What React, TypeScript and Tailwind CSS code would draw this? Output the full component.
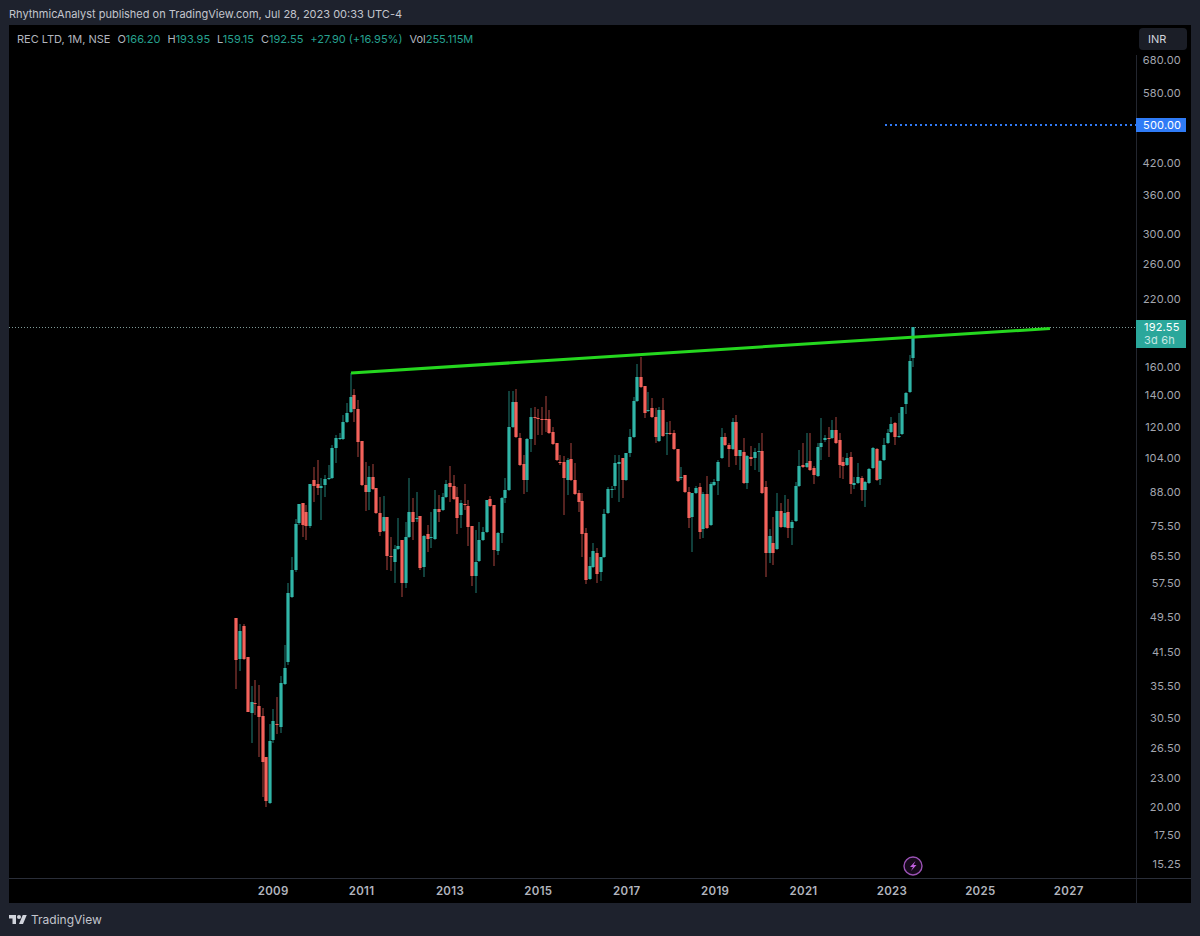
const sans = 'font-["Inter","Liberation_Sans",sans-serif]';

// x, body top, body bottom, high, low, up
type Candle = [number, number, number, number, number, number];

const candles: Candle[] = [
  [236, 618, 660, 618, 689, 0], [240, 631, 659, 624, 671, 1], [244, 626, 659, 624, 660, 0], [248, 657, 712, 657, 712, 0],
  [252, 702, 713, 686, 743, 1], [255, 703, 704, 680, 715, 0], [259, 706, 717, 685, 757, 0], [263, 716, 762, 708, 797, 0],
  [266, 757, 801, 757, 807, 0], [270, 741, 803, 724, 804, 1], [273, 721, 740, 709, 743, 1], [277, 724, 725, 697, 734, 0],
  [281, 683, 727, 676, 733, 1], [285, 668, 684, 645, 685, 1], [288, 593, 662, 583, 665, 1], [292, 570, 597, 557, 598, 1],
  [296, 524, 570, 519, 572, 1], [299, 504, 523, 504, 525, 1], [303, 503, 525, 503, 537, 0], [306, 512, 526, 505, 540, 0],
  [310, 484, 526, 484, 528, 1], [314, 480, 486, 467, 502, 0], [318, 484, 488, 460, 495, 0], [321, 486, 488, 478, 520, 1],
  [325, 479, 485, 475, 497, 1], [329, 478, 479, 465, 480, 1], [332, 448, 478, 445, 479, 1], [336, 438, 448, 435, 463, 1],
  [340, 438, 439, 433, 440, 1], [343, 422, 439, 415, 440, 1], [347, 413, 422, 403, 423, 1], [351, 397, 412, 373, 413, 1],
  [354, 395, 409, 389, 422, 0], [358, 409, 442, 400, 457, 0], [362, 441, 485, 441, 486, 0], [366, 485, 492, 462, 511, 0],
  [369, 477, 492, 466, 510, 1], [373, 477, 489, 464, 490, 0], [376, 488, 513, 488, 514, 0], [380, 513, 532, 497, 536, 0],
  [384, 517, 531, 496, 532, 1], [387, 517, 556, 517, 570, 0], [391, 556, 557, 537, 571, 0], [395, 549, 562, 545, 583, 1],
  [398, 546, 549, 518, 550, 1], [402, 540, 583, 540, 597, 0], [406, 537, 583, 522, 588, 1], [409, 512, 537, 478, 538, 1],
  [413, 512, 522, 498, 540, 0], [417, 518, 519, 492, 522, 1], [420, 516, 568, 516, 570, 0], [424, 536, 567, 535, 577, 1],
  [428, 534, 539, 525, 552, 0], [431, 537, 538, 512, 548, 1], [435, 509, 539, 490, 540, 1], [439, 509, 512, 495, 522, 0],
  [443, 497, 510, 493, 511, 1], [446, 484, 497, 480, 498, 1], [450, 483, 487, 466, 502, 0], [454, 486, 499, 475, 500, 0],
  [457, 497, 518, 487, 534, 0], [461, 503, 515, 500, 528, 1], [465, 504, 505, 484, 510, 0], [468, 506, 527, 500, 546, 0],
  [472, 526, 576, 526, 586, 0], [476, 562, 576, 530, 593, 1], [479, 540, 561, 522, 562, 1], [483, 532, 540, 527, 541, 1],
  [487, 500, 532, 500, 533, 1], [490, 499, 506, 496, 507, 0], [494, 505, 550, 505, 566, 0], [498, 533, 551, 532, 555, 1],
  [502, 498, 533, 497, 543, 1], [505, 490, 498, 478, 503, 1], [509, 427, 490, 391, 491, 1], [513, 402, 427, 391, 428, 1],
  [516, 402, 437, 389, 438, 0], [520, 438, 465, 433, 466, 0], [524, 464, 480, 455, 494, 0], [527, 439, 480, 438, 492, 1],
  [531, 417, 439, 408, 452, 1], [535, 417, 418, 407, 445, 0], [538, 418, 419, 409, 435, 0], [542, 419, 420, 407, 435, 0],
  [546, 419, 420, 396, 432, 0], [549, 419, 433, 410, 434, 0], [553, 432, 444, 427, 445, 0], [557, 443, 460, 443, 461, 0],
  [560, 462, 463, 455, 465, 0], [564, 462, 478, 456, 515, 0], [568, 460, 480, 458, 495, 1], [571, 459, 480, 443, 481, 0],
  [575, 480, 494, 463, 495, 0], [579, 493, 502, 490, 512, 0], [582, 501, 534, 493, 557, 0], [586, 533, 580, 528, 584, 0],
  [590, 566, 579, 557, 580, 1], [593, 551, 567, 543, 568, 1], [597, 553, 574, 548, 583, 0], [601, 557, 572, 557, 581, 1],
  [604, 514, 557, 509, 558, 1], [608, 489, 513, 487, 514, 1], [612, 489, 490, 486, 498, 1], [615, 463, 486, 455, 490, 1],
  [619, 462, 464, 455, 502, 1], [623, 458, 480, 458, 498, 0], [626, 453, 480, 453, 481, 1], [630, 437, 453, 429, 457, 1],
  [634, 401, 437, 397, 438, 1], [637, 377, 401, 364, 402, 1], [641, 377, 387, 357, 388, 0], [645, 386, 413, 386, 418, 0],
  [648, 410, 411, 392, 412, 1], [652, 408, 417, 398, 418, 0], [656, 417, 437, 408, 443, 0], [659, 410, 441, 407, 442, 1],
  [663, 410, 436, 398, 437, 0], [667, 433, 434, 422, 455, 1], [670, 433, 434, 421, 435, 0], [674, 433, 449, 430, 450, 0],
  [678, 449, 481, 449, 482, 0], [681, 477, 478, 467, 480, 1], [685, 475, 492, 475, 493, 0], [689, 492, 518, 487, 528, 0],
  [692, 493, 517, 493, 552, 1], [696, 488, 493, 486, 494, 1], [700, 487, 532, 483, 539, 0], [703, 494, 529, 492, 538, 1],
  [707, 494, 528, 476, 529, 0], [711, 484, 525, 482, 526, 1], [714, 482, 485, 479, 486, 1], [718, 462, 481, 460, 495, 1],
  [722, 437, 458, 428, 459, 1], [725, 437, 445, 433, 446, 0], [729, 445, 449, 443, 467, 0], [733, 422, 449, 418, 450, 1],
  [736, 422, 456, 415, 465, 0], [740, 450, 456, 450, 470, 1], [744, 452, 483, 438, 484, 0], [747, 456, 483, 455, 489, 1],
  [751, 457, 459, 446, 466, 0], [755, 452, 458, 448, 470, 1], [759, 451, 452, 443, 472, 1], [762, 451, 493, 433, 494, 0],
  [766, 487, 553, 481, 577, 0], [770, 536, 553, 529, 563, 1], [773, 543, 553, 517, 565, 0], [777, 511, 549, 493, 550, 1],
  [781, 511, 527, 503, 528, 0], [785, 513, 527, 495, 528, 1], [788, 512, 528, 499, 538, 0], [792, 522, 528, 520, 545, 1],
  [796, 486, 521, 482, 522, 1], [799, 466, 486, 450, 487, 1], [803, 465, 467, 443, 468, 0], [807, 463, 467, 433, 468, 1],
  [810, 461, 470, 433, 471, 0], [814, 468, 475, 466, 484, 0], [818, 447, 476, 443, 477, 1], [821, 443, 447, 418, 460, 1],
  [825, 438, 440, 435, 442, 1], [829, 438, 439, 427, 457, 0], [832, 430, 438, 420, 439, 1], [836, 430, 443, 417, 444, 0],
  [840, 440, 465, 433, 478, 0], [843, 462, 466, 457, 479, 0], [847, 458, 465, 453, 466, 1], [851, 457, 484, 452, 494, 0],
  [854, 483, 485, 477, 489, 1], [858, 477, 483, 463, 484, 1], [862, 478, 490, 476, 501, 0], [865, 482, 490, 481, 507, 1],
  [869, 469, 483, 468, 484, 1], [873, 448, 468, 447, 469, 1], [877, 449, 480, 448, 481, 0], [880, 461, 479, 460, 485, 1],
  [884, 445, 460, 438, 461, 1], [888, 433, 443, 429, 444, 1], [891, 424, 432, 417, 433, 1], [895, 423, 437, 422, 445, 0],
  [899, 436, 437, 413, 438, 1], [902, 407, 434, 407, 435, 1], [906, 393, 404, 392, 414, 1], [910, 361, 392, 355, 393, 1],
  [913, 327, 358, 327, 367, 1],
];

const prices: [string, number][] = [
  ['680.00', 60], ['580.00', 93], ['500.00', 125], ['420.00', 163], ['360.00', 195], ['300.00', 234], ['260.00', 264],
  ['220.00', 299], ['192.55', 327], ['160.00', 367], ['140.00', 395], ['120.00', 427], ['104.00', 458], ['88.00', 492],
  ['75.50', 526], ['65.50', 556], ['57.50', 583], ['49.50', 617], ['41.50', 652], ['35.50', 686], ['30.50', 718],
  ['26.50', 748], ['23.00', 778], ['20.00', 807], ['17.50', 835], ['15.25', 864],
];

const years = ['2009', '2011', '2013', '2015', '2017', '2019', '2021', '2023', '2025', '2027'];

const legend = [
  { label: 'O', value: '166.20' },
  { label: 'H', value: '193.95' },
  { label: 'L', value: '159.15' },
  { label: 'C', value: '192.55' },
  { label: '', value: '+27.90 (+16.95%)' },
  { label: 'Vol', value: '255.115M' },
];

const Chart = () => (
  <svg width="1127" height="853" viewBox="9 25 1127 853" className="block shrink-0">
    <line x1="9" y1="327.5" x2="1136" y2="327.5" stroke="#7f9a97" strokeWidth="1" strokeDasharray="1 2" />
    <line x1="885" y1="125" x2="1136" y2="125" stroke="#3179f5" strokeWidth="2" strokeDasharray="2 3" />
    {candles.map(([x, top, bottom, high, low, up]) => {
      const color = up ? '#30b5a7' : '#f4625b';
      return (
        <g key={x}>
          <line x1={x} y1={high} x2={x} y2={low} stroke={color} strokeWidth="1" opacity="0.7" />
          <rect x={x - 1.6} y={top} width="3.2" height={Math.max(bottom - top, 1)} fill={color} />
        </g>
      );
    })}
    <line x1="351" y1="373" x2="1050" y2="328.5" stroke="#25d71f" strokeWidth="3" />
    <circle cx="913" cy="866" r="9" fill="#16091b" stroke="#9b52b5" strokeWidth="1.4" />
    <path d="M915.5 861 L910 867 H913 L911 871 L916.5 865 H913.5 Z" fill="#c25fe0" />
  </svg>
);

const PriceAxis = () => (
  <div className="flex h-[853px] w-[55px] flex-col">
    <div className="h-[30px] pl-[3px] pt-[3px]">
      <div className="flex h-[22px] w-[48px] items-center rounded-[4px] bg-[#1b1e27] pl-[9px] text-[11px] text-[#d1d4dc]">
        INR
      </div>
    </div>
    <div className="flex-1 border-l border-[#23262f] pt-[5px]">
      {prices.map(([label, y], i) => {
        const next = i < prices.length - 1 ? prices[i + 1][1] : y + 14;
        if (label === '500.00') {
          return (
            <div key={label} className="relative" style={{ height: next - y }}>
              <div className="absolute left-[-1px] top-[-7px] flex h-[14px] w-[50px] items-center bg-[#2f7bf6] pl-[7px] text-[11px] tracking-[0.2px] text-white">
                {label}
              </div>
            </div>
          );
        }
        if (label === '192.55') {
          return (
            <div key={label} className="relative" style={{ height: next - y }}>
              <div className="absolute left-[-1px] top-[-7px] flex h-[28px] w-[50px] flex-col justify-center bg-[#2aa79b] pl-[8px] text-[11px] leading-[13px] tracking-[0.2px] text-white">
                <span>{label}</span>
                <span className="text-[#c6e8e4]">3d 6h</span>
              </div>
            </div>
          );
        }
        return (
          <div key={label} className="flex justify-end pr-[10px] text-[11px] leading-[0] tracking-[0.2px] text-[#a3a6af]" style={{ height: next - y }}>
            {label}
          </div>
        );
      })}
    </div>
  </div>
);

export default function App() {
  return (
    <div className={`h-[936px] w-[1200px] overflow-hidden bg-[#1e222d] ${sans}`}>
      <div className="flex h-[25px] items-center pl-[9px] pt-[4px] text-[11px] text-[#c3c6ce]">
        RhythmicAnalyst published on TradingView.com, Jul 28, 2023 00:33 UTC-4
      </div>
      <div className="relative ml-[9px] h-[878px] w-[1182px] bg-black">
        <div className="absolute left-[8px] top-[7px] flex h-[14px] items-center gap-[7px] text-[11px] text-[#b2b5be]">
          <span>REC LTD, 1M, NSE</span>
          {legend.map((item) => (
            <span key={item.value}>
              {item.label}
              <span className="text-[#26a08f]">{item.value}</span>
            </span>
          ))}
        </div>
        <div className="flex h-[854px] border-b border-[#2a2e39]">
          <Chart />
          <PriceAxis />
        </div>
        <div className="flex h-[24px]">
          <div className="flex w-[1127px] items-center pl-[220px] pt-[1px] text-[11.5px] font-semibold tracking-[0.3px] text-[#b2b5be]">
            {years.map((y) => (
              <div key={y} className="w-[88.4px] shrink-0 text-center">{y}</div>
            ))}
          </div>
          <div className="border-l border-[#23262f]" />
        </div>
      </div>
      <div className="flex h-[33px] items-center gap-[4px] pl-[9px] text-[12px] text-[#c3c6ce]">
        <svg width="18" height="9" viewBox="0 4 36 18" fill="#d1d4dc">
          <path d="M14 22H7V11H0V4h14v18zM28 22h-8l7.5-18h8L28 22z" />
          <circle cx="20" cy="8" r="4" />
        </svg>
        TradingView
      </div>
    </div>
  );
}
